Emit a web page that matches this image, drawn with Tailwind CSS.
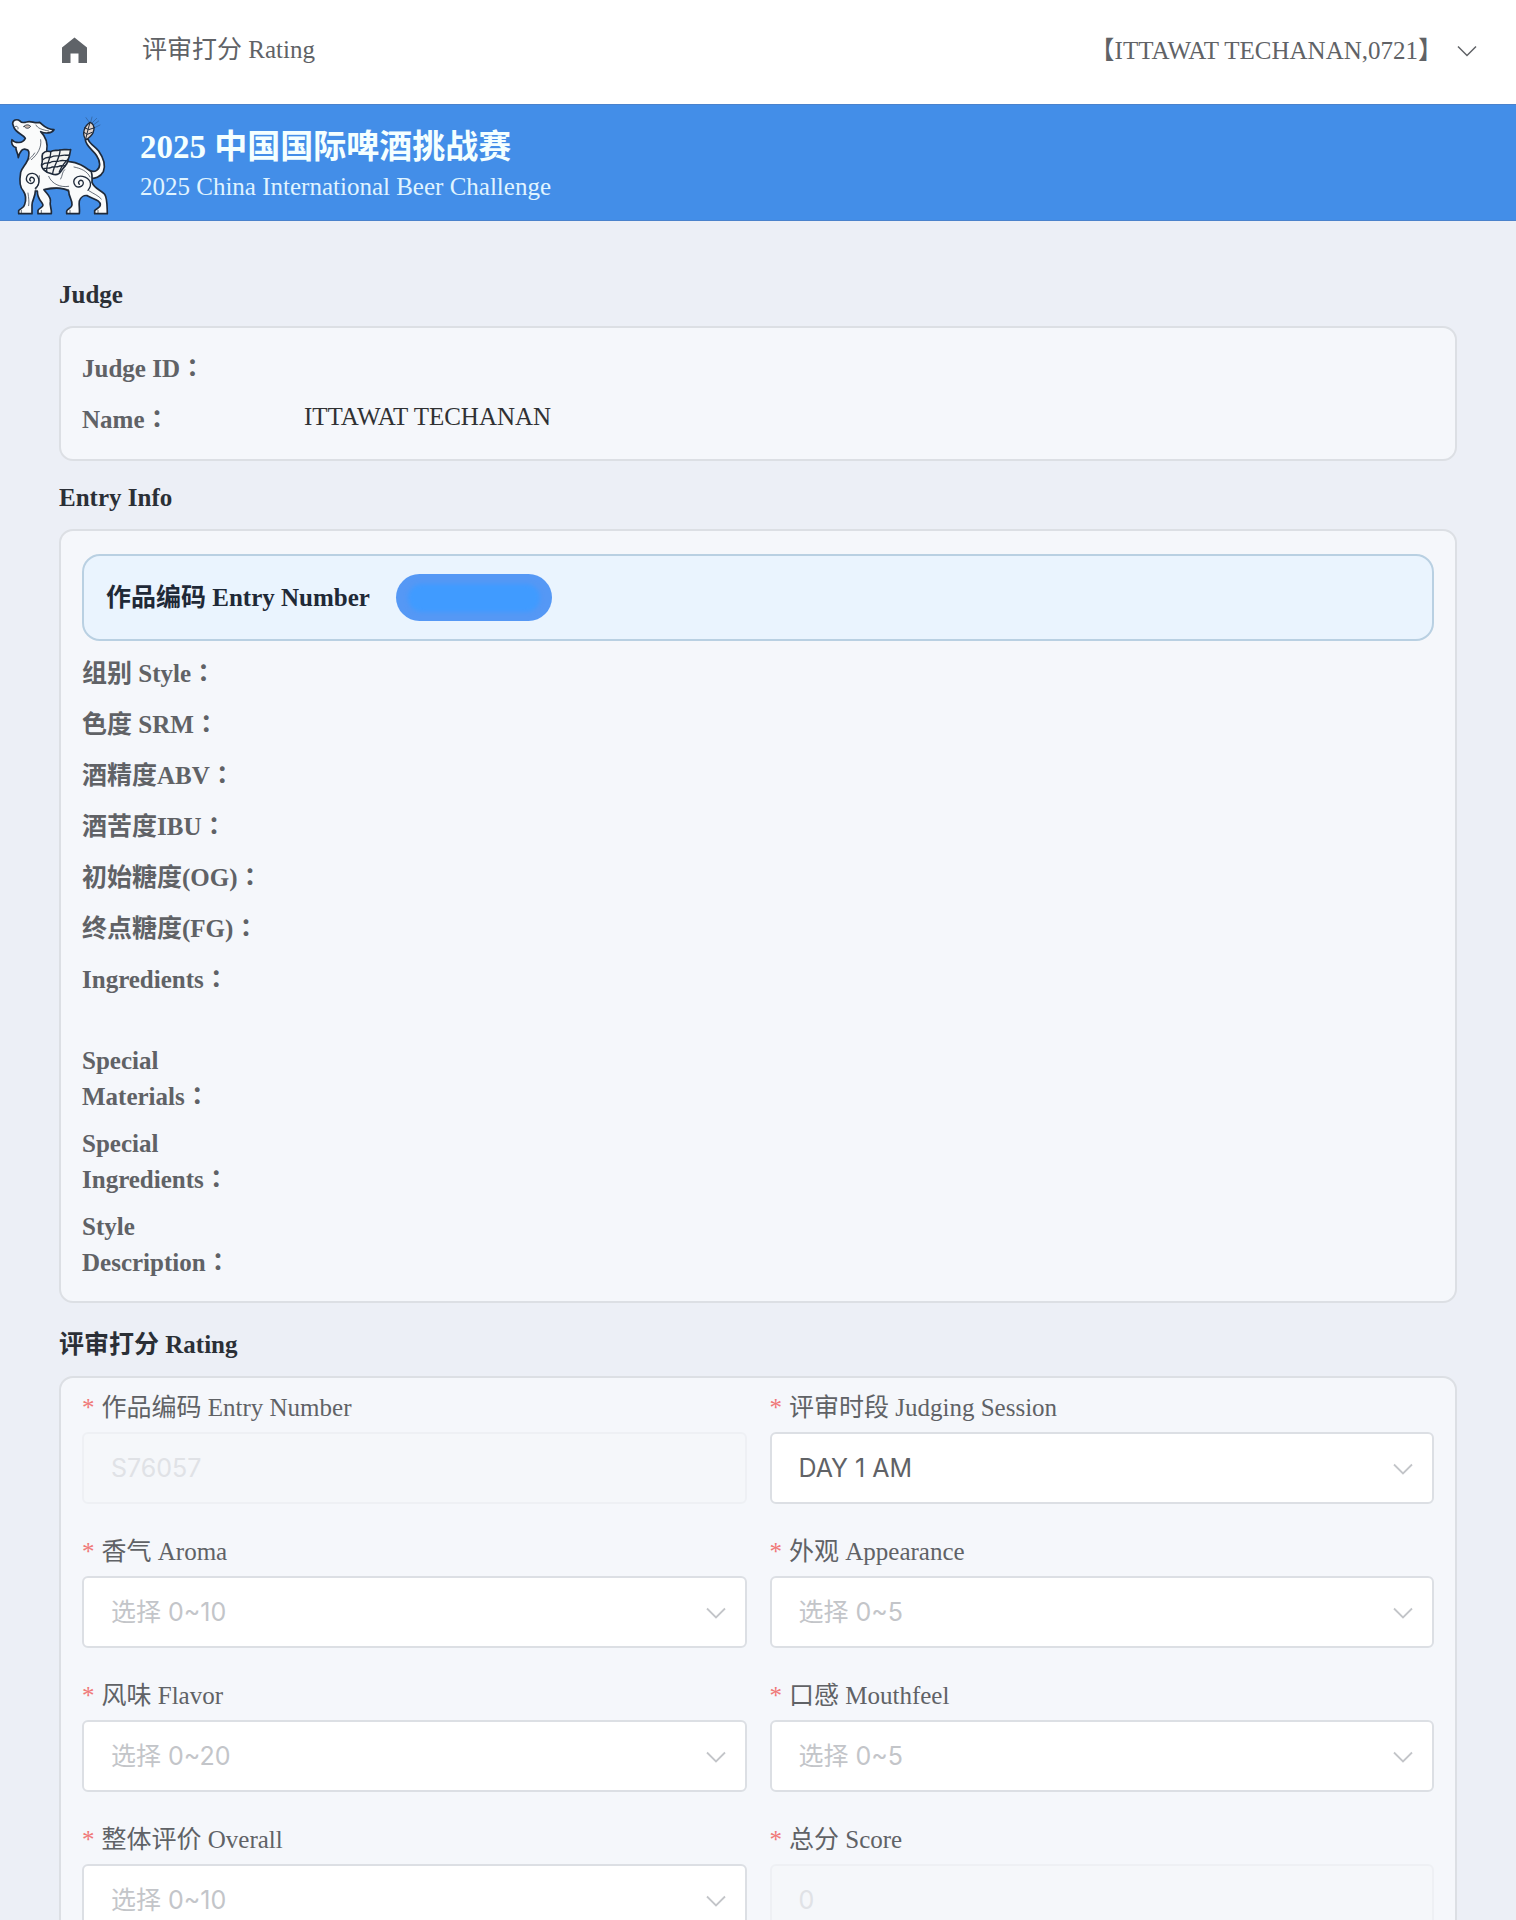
<!DOCTYPE html>
<html lang="en">
<head>
    <meta charset="UTF-8">
    <meta name="viewport" content="width=device-width, initial-scale=1.0">
    <title>评审打分 Rating</title>

    <!-- Tailwind CSS -->
    <script src="https://cdn.jsdelivr.net/npm/@tailwindcss/browser@4"></script>

    <style>
        body {
            font-family: 'Liberation Serif', 'Noto Sans CJK SC', serif;
        }
        input, select {
            font-family: 'Inter', 'Noto Sans CJK SC', sans-serif;
        }
        /* full-width colon sits in the middle of its box */
        dt::after {
            content: '：';
            font-family: 'Noto Sans CJK TC', sans-serif;
            line-height: 1;
        }
    </style>
</head>

<body class="bg-[#eceff6] text-[25px] leading-[36px] text-[#606266] min-h-screen overflow-x-hidden">
    <!-- Header -->
    <header class="bg-white h-26 flex items-center justify-between pl-[60px] pr-[39px] pb-1">
        <div class="flex items-center gap-[53px]">
            <a href="#" aria-label="Home">
                <svg class="w-[29px] h-[29px]" viewBox="0 0 29 29" fill="#5f6368">
                    <path d="M14.500 1.500 27 11.500V27H18.500V17.500H10.500V27H2V11.500Z"/>
                </svg>
            </a>
            <h1>评审打分 Rating</h1>
        </div>
        <button type="button" class="flex items-center gap-[14px] pt-[2px]">
            <span>【ITTAWAT TECHANAN,0721】</span>
            <svg class="w-5 h-5" viewBox="0 0 20 20" fill="none" stroke="#606266" stroke-width="1.500">
                <path d="M1 5.500 10 14.500 19 5.500"/>
            </svg>
        </button>
    </header>

    <!-- Banner -->
    <div class="bg-[#438ee8] h-[117px] border-y border-[#4a82cc] flex items-center gap-[30px] pl-2">
        <svg class="w-[102px] h-[104px] shrink-0" viewBox="24 32 306 312" fill="none" stroke="#1f2a3a" stroke-width="5" stroke-linejoin="round" stroke-linecap="round">
            <!-- tail -->
            <path fill="#fafbfb" d="M256 118C258 138 278 148 290 166C302 184 302 202 290 210C284 214 276 214 268 210L268 234C284 236 302 230 310 214C318 194 310 172 296 152C284 138 268 130 264 116Z"/>
            <!-- body -->
            <path fill="#fafbfb" d="M38 70C38 60 50 54 60 62C66 70 72 66 80 65C92 60 104 70 118 66C128 72 136 88 162 88C154 100 136 100 122 94C136 108 144 130 140 152L136 182C160 196 184 180 208 184C236 186 254 200 274 214C278 226 276 236 276 246C284 266 304 270 314 282C322 294 321 312 322 340H284V331C290 324 301 322 301 314C301 300 284 298 262 286C252 284 242 290 238 302C236 316 240 326 238 340H200V332C204 324 215 324 216 314C218 300 206 290 206 272C190 262 160 262 132 268C142 282 154 290 151 304C148 316 156 326 154 340H114V330C118 322 129 322 129 314C128 304 112 300 112 272L106 272C106 290 96 300 96 314V340H56V331C60 324 72 324 74 312C78 300 78 284 70 272C60 262 58 240 62 216C66 200 84 188 86 168C88 158 88 150 80 148C68 142 60 152 55 172C54 156 46 150 48 142C38 140 32 128 36 118C46 130 68 130 76 114C70 102 48 98 42 82Z"/>
            <!-- face and shading -->
            <g stroke-width="2.500">
                <path fill="#c9b9b0" d="M72 78C78 72 86 72 92 78C86 86 78 86 72 78Z"/>
                <path d="M108 74C112 84 126 88 146 92M44 80C50 74 56 80 54 86M122 118C126 140 112 164 94 178M104 158C98 168 90 174 84 180M118 226C120 244 114 256 106 270M132 268C154 256 182 264 206 268M146 228C156 252 182 262 206 258M194 208C186 214 188 226 182 236M222 200C242 204 262 212 270 230M84 278C86 294 88 304 86 316M268 272C280 280 296 286 304 296M64 330V338M124 330V338M210 330V338M294 330V338" stroke-width="2"/>
            </g>
            <!-- spirals -->
            <path stroke-width="4" d="M92 242C86 238 91 228 99 232C109 238 99 254 87 248C73 240 79 218 98 219C118 222 124 250 106 264"/>
            <path stroke-width="4" d="M238 252C232 246 240 236 248 242C256 254 238 266 226 256C214 240 228 224 248 228C268 232 280 250 264 270"/>
            <!-- wing -->
            <path fill="#f4f4f2" stroke-width="5" d="M128 160C136 150 144 152 152 154C160 147 172 152 180 149C190 146 202 149 212 148C209 160 209 168 205 176C203 184 202 190 196 196C190 204 186 208 182 214C176 224 164 224 154 220C140 218 120 204 126 188C129 178 124 170 128 160Z"/>
            <path stroke-width="4" d="M128 178C140 168 146 172 154 170C164 164 172 168 182 166C192 163 200 166 208 164M126 194C136 184 144 190 152 186C160 180 168 186 178 182C188 178 196 183 203 180M130 206C138 200 144 206 152 202C160 196 168 202 176 198C182 194 190 198 196 196M152 154C154 172 138 190 140 214M180 149C182 170 160 196 158 220M205 176C196 184 186 196 178 214"/>
            <!-- barley ear -->
            <path fill="#e4d5cc" stroke-width="4" d="M256 116C246 100 252 78 270 66C288 74 286 100 262 116Z"/>
            <path stroke-width="3" d="M258 112C262 96 266 80 270 66M252 96 262 102 276 96M254 82 266 88 284 82"/>
            <path stroke-width="1" d="M268 66 258 52M272 66 276 50M276 68 290 54M280 74 296 62M284 82 300 74"/>
        </svg>
        <div class="pt-1">
            <p class="text-[33px] leading-[44px] font-bold text-[#f4ffff]">2025 中国国际啤酒挑战赛</p>
            <p class="text-[#e0f4ff]">2025 China International Beer Challenge</p>
        </div>
    </div>

    <main class="px-[59px] pt-14">
        <!-- Judge -->
        <section class="mb-[19px]">
            <h2 class="font-bold text-[#2b2f36] mb-[13px]">Judge</h2>
            <dl class="bg-[#f5f7fb] border-2 border-[#dcdfe4] rounded-[14px] px-[21px] pt-[23px] pb-[17px] flex flex-col gap-[11px]">
                <div class="flex items-start gap-6 min-h-10">
                    <dt class="w-[198px] shrink-0 font-bold">Judge ID</dt>
                    <dd></dd>
                </div>
                <div class="flex items-start gap-6 min-h-10">
                    <dt class="w-[198px] shrink-0 font-bold">Name</dt>
                    <dd class="leading-[30px] text-[#303133]">ITTAWAT TECHANAN</dd>
                </div>
            </dl>
        </section>

        <!-- Entry info -->
        <section class="mb-6">
            <h2 class="font-bold text-[#2b2f36] mb-[13px]">Entry Info</h2>
            <div class="bg-[#f5f7fb] border-2 border-[#dcdfe4] rounded-[14px] px-[21px] pt-[23px] pb-5">
                <div class="h-[87px] mb-[15px] px-[22px] flex items-center gap-[26px] bg-[#eaf4fe] border-2 border-[#b9d0e2] rounded-[18px]">
                    <span class="font-bold text-[#1f2937]">作品编码 Entry Number</span>
                    <span class="w-[156px] h-[47px] rounded-full bg-[#5598f5] flex items-center justify-center">
                        <span class="w-[132px] h-7 rounded-full bg-[#409bff] blur-[2px]"></span>
                    </span>
                </div>
                <dl class="flex flex-col gap-[11px] font-bold">
                    <div class="min-h-10"><dt class="w-[198px]">组别 Style</dt></div>
                    <div class="min-h-10"><dt class="w-[198px]">色度 SRM</dt></div>
                    <div class="min-h-10"><dt class="w-[198px]">酒精度ABV</dt></div>
                    <div class="min-h-10"><dt class="w-[198px]">酒苦度IBU</dt></div>
                    <div class="min-h-10"><dt class="w-[198px]">初始糖度(OG)</dt></div>
                    <div class="min-h-10"><dt class="w-[198px]">终点糖度(FG)</dt></div>
                    <div class="min-h-[70px]"><dt class="w-[198px]">Ingredients</dt></div>
                    <div class="min-h-10"><dt class="w-[198px]">Special Materials</dt></div>
                    <div class="min-h-10"><dt class="w-[198px]">Special Ingredients</dt></div>
                    <div class="min-h-10"><dt class="w-[198px]">Style Description</dt></div>
                </dl>
            </div>
        </section>

        <!-- Rating form -->
        <section>
            <h2 class="font-bold text-[#2b2f36] mb-[13px]">评审打分 Rating</h2>
            <form class="bg-[#f5f7fb] border-2 border-[#dcdfe4] rounded-[14px] px-[21px] pt-3 pb-8 grid grid-cols-2 gap-x-[23px] gap-y-[30px]">
                <div class="flex flex-col gap-[6px]">
                    <label for="entry"><span class="text-[#f07878] mr-[7px]">*</span>作品编码 Entry Number</label>
                    <input id="entry" type="text" value="S76057" disabled class="w-full h-18 px-[27px] rounded-md border-2 border-[#eef0f4] bg-[#f5f7fa] text-[#e0e2e6]">
                </div>
                <div class="flex flex-col gap-[6px]">
                    <label for="session"><span class="text-[#f07878] mr-[7px]">*</span>评审时段 Judging Session</label>
                    <div class="relative">
                        <select id="session" class="appearance-none w-full h-18 px-[27px] rounded-md border-2 border-[#dcdfe4] bg-white text-[#606266]">
                            <option>DAY 1 AM</option>
                        </select>
                        <svg class="absolute right-[21px] top-[27px] w-5 h-5 pointer-events-none" viewBox="0 0 20 20" fill="none" stroke="#c3c5c9" stroke-width="1.800"><path d="M1 5.500 10 14.500 19 5.500"/></svg>
                    </div>
                </div>
                <div class="flex flex-col gap-[6px]">
                    <label for="aroma"><span class="text-[#f07878] mr-[7px]">*</span>香气 Aroma</label>
                    <div class="relative">
                        <select id="aroma" class="appearance-none w-full h-18 px-[27px] rounded-md border-2 border-[#dcdfe4] bg-white text-[#c3c5c9]">
                            <option>选择 0~10</option>
                        </select>
                        <svg class="absolute right-[21px] top-[27px] w-5 h-5 pointer-events-none" viewBox="0 0 20 20" fill="none" stroke="#c3c5c9" stroke-width="1.800"><path d="M1 5.500 10 14.500 19 5.500"/></svg>
                    </div>
                </div>
                <div class="flex flex-col gap-[6px]">
                    <label for="appearance"><span class="text-[#f07878] mr-[7px]">*</span>外观 Appearance</label>
                    <div class="relative">
                        <select id="appearance" class="appearance-none w-full h-18 px-[27px] rounded-md border-2 border-[#dcdfe4] bg-white text-[#c3c5c9]">
                            <option>选择 0~5</option>
                        </select>
                        <svg class="absolute right-[21px] top-[27px] w-5 h-5 pointer-events-none" viewBox="0 0 20 20" fill="none" stroke="#c3c5c9" stroke-width="1.800"><path d="M1 5.500 10 14.500 19 5.500"/></svg>
                    </div>
                </div>
                <div class="flex flex-col gap-[6px]">
                    <label for="flavor"><span class="text-[#f07878] mr-[7px]">*</span>风味 Flavor</label>
                    <div class="relative">
                        <select id="flavor" class="appearance-none w-full h-18 px-[27px] rounded-md border-2 border-[#dcdfe4] bg-white text-[#c3c5c9]">
                            <option>选择 0~20</option>
                        </select>
                        <svg class="absolute right-[21px] top-[27px] w-5 h-5 pointer-events-none" viewBox="0 0 20 20" fill="none" stroke="#c3c5c9" stroke-width="1.800"><path d="M1 5.500 10 14.500 19 5.500"/></svg>
                    </div>
                </div>
                <div class="flex flex-col gap-[6px]">
                    <label for="mouthfeel"><span class="text-[#f07878] mr-[7px]">*</span>口感 Mouthfeel</label>
                    <div class="relative">
                        <select id="mouthfeel" class="appearance-none w-full h-18 px-[27px] rounded-md border-2 border-[#dcdfe4] bg-white text-[#c3c5c9]">
                            <option>选择 0~5</option>
                        </select>
                        <svg class="absolute right-[21px] top-[27px] w-5 h-5 pointer-events-none" viewBox="0 0 20 20" fill="none" stroke="#c3c5c9" stroke-width="1.800"><path d="M1 5.500 10 14.500 19 5.500"/></svg>
                    </div>
                </div>
                <div class="flex flex-col gap-[6px]">
                    <label for="overall"><span class="text-[#f07878] mr-[7px]">*</span>整体评价 Overall</label>
                    <div class="relative">
                        <select id="overall" class="appearance-none w-full h-18 px-[27px] rounded-md border-2 border-[#dcdfe4] bg-white text-[#c3c5c9]">
                            <option>选择 0~10</option>
                        </select>
                        <svg class="absolute right-[21px] top-[27px] w-5 h-5 pointer-events-none" viewBox="0 0 20 20" fill="none" stroke="#c3c5c9" stroke-width="1.800"><path d="M1 5.500 10 14.500 19 5.500"/></svg>
                    </div>
                </div>
                <div class="flex flex-col gap-[6px]">
                    <label for="score"><span class="text-[#f07878] mr-[7px]">*</span>总分 Score</label>
                    <input id="score" type="text" value="0" disabled class="w-full h-18 px-[27px] rounded-md border-2 border-[#eef0f4] bg-[#f5f7fa] text-[#e0e2e6]">
                </div>
            </form>
        </section>
    </main>
</body>
</html>
